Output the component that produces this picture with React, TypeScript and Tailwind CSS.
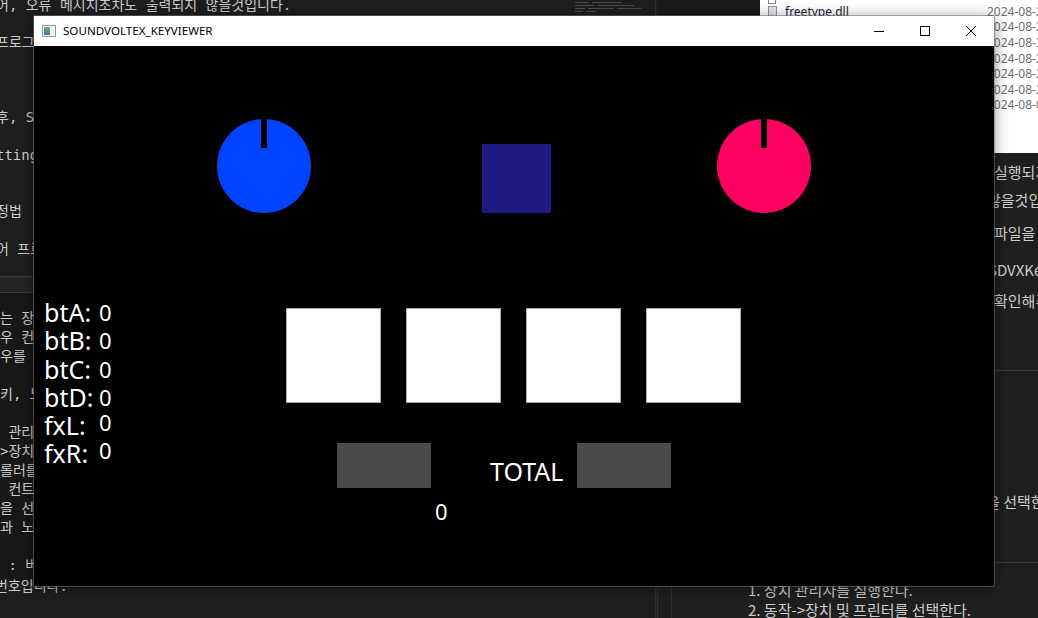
import React from 'react';

const upperLines = [
  '어, 오류 메시지조차도 출력되지 않을것입니다.',
  '',
  '프로그램이 정상적으로 실행되지 않는다면',
  '',
  '',
  '',
  '후, Settings 파일을 다시 확인해주세요.',
  '',
  'ttings.json 파일의 위치',
  '',
  '',
  '정법',
  '',
  '어 프로그램을 다시 실행해주세요.',
];

const lowerLines = [
  '는 장치 관리자에서 확인할 수 있습니다.',
  '우 컨트롤러의 버튼 번호가 다른',
  '우를 수정해야 합니다.',
  '',
  '키, 노브의 번호는 아래와 같습니다.',
  '',
  ' 관리자를 실행한다.',
  '>장치 및 프린터를 선택한다.',
  '롤러를 우클릭한다.',
  ' 컨트롤러 설정을 연다.',
  '을 선택한다.',
  '과 노브를 확인한다.',
  '',
  ' : 버튼 번호',
];

const dates = ['2024-08-21', '2024-08-21', '2024-08-30', '2024-08-21', '2024-08-21', '2024-08-21', '2024-08-08'];

const stats = [
  { label: 'btA:', fx: false },
  { label: 'btB:', fx: false },
  { label: 'btC:', fx: false },
  { label: 'btD:', fx: false },
  { label: 'fxL:', fx: true },
  { label: 'fxR:', fx: true },
];

function Knob({ color }: { color: string }) {
  return (
    <div className={`relative w-[94px] h-[94px] rounded-full ${color}`}>
      <div className="absolute top-0 left-[44px] w-[6px] h-[29px] bg-black" />
    </div>
  );
}

function KeyViewer() {
  return (
    <div className="relative h-[540px] bg-black text-white font-['Noto_Sans',sans-serif]">
      {/* left counters */}
      <div className="absolute left-[10px] top-[252px] flex flex-col">
        {stats.map((s) => (
          <div key={s.label} className="flex items-baseline h-[28.3px] leading-[28.3px]">
            <span className="w-[55px] text-[25px]">{s.label}</span>
            <span className={`relative text-[22px] ${s.fx ? '-top-[4px]' : '-top-[1px]'}`}>0</span>
          </div>
        ))}
      </div>

      {/* knobs + start */}
      <div className="flex items-end pt-[73px]">
        <div className="ml-[183px]">
          <Knob color="bg-[#0044ff]" />
        </div>
        <div className="ml-[171px] w-[69px] h-[69px] bg-[#1d1a84]" />
        <div className="ml-[166px]">
          <Knob color="bg-[#ff0062]" />
        </div>
      </div>

      {/* bt buttons */}
      <div className="flex gap-[25px] ml-[252px] mt-[95px]">
        {[0, 1, 2, 3].map((i) => (
          <div key={i} className="w-[95px] h-[95px] bg-white border border-[#a8a8a8]" />
        ))}
      </div>

      {/* fx + total */}
      <div className="flex items-start h-[45px] mt-[40px]">
        <div className="ml-[303px] w-[94px] h-[45px] bg-[#4a4a4a]" />
        <span className="ml-[59px] mt-[16px] w-[87px] text-[25px] leading-[25px]">TOTAL</span>
        <div className="w-[94px] h-[45px] bg-[#4a4a4a]" />
      </div>
      <div className="ml-[401px] mt-[12px] text-[22px] leading-[22px]">0</div>
    </div>
  );
}

export default function App() {
  return (
    <div className="relative w-[1038px] h-[618px] overflow-hidden bg-[#1f1f1f] font-['Noto_Sans_CJK_KR',sans-serif]">
      {/* left editor */}
      <div className="absolute left-0 top-0 w-[656px] h-[618px] bg-[#1e1e1e] border-r border-[#2f2f2f] text-[#cccccc] text-[14px] font-['DejaVu_Sans_Mono','Noto_Sans_CJK_KR',monospace] whitespace-pre">
        <div className="h-[280px] -mt-[4.4px] -ml-[4px] overflow-hidden">
          {upperLines.map((l, i) => (
            <div key={i} className="h-[18.8px] leading-[18.8px]">{l}</div>
          ))}
        </div>
        <div className="h-[17px] bg-[#252526] border-y border-[#3a3a3a]" />
        <div className="h-[289px] bg-[#181818] pt-[16px]">
          {lowerLines.map((l, i) => (
            <div key={i} className="h-[19px] leading-[19px]">{l}</div>
          ))}
        </div>
        <div className="h-[19px] leading-[19px] -ml-[5px] -mt-[5px]">번호입니다.</div>
        {/* minimap */}
        <div className="absolute left-[575px] top-[2px] flex flex-col gap-[2px] opacity-60">
          <div className="flex gap-[3px]"><div className="w-[14px] h-px bg-[#6a6a6a]" /><div className="w-[30px] h-px bg-[#6a6a6a]" /></div>
          <div className="flex gap-[3px]"><div className="w-[20px] h-px bg-[#6a6a6a]" /><div className="w-[36px] h-px bg-[#6a6a6a]" /></div>
          <div className="flex gap-[3px]"><div className="w-[10px] h-px bg-[#4d7fb8]" /><div className="w-[26px] h-px bg-[#6a6a6a]" /><div className="w-[24px] h-px bg-[#6a6a6a]" /></div>
          <div className="flex gap-[3px]"><div className="w-[8px] h-px bg-[#6a6a6a]" /><div className="w-[10px] h-px bg-[#6a6a6a]" /></div>
        </div>
      </div>

      {/* strip between editor and explorer */}
      <div className="absolute left-[657px] top-0 w-[103px] h-[16px] bg-[#1a1a1a]" />

      {/* file explorer */}
      <div className="absolute left-[760px] top-0 w-[278px] h-[153px] overflow-hidden bg-white font-['Noto_Sans',sans-serif] text-[12px]">
        <div className="flex flex-col -mt-[4px]">
          <div className="h-[8px] ml-[8px] w-[8px] border border-[#888] border-t-0" />
          {dates.map((d, i) => (
            <div key={i} className="flex items-center h-[15.6px] whitespace-nowrap">
              <div className="w-[25px] shrink-0 flex justify-center">
                {i === 0 && <div className="w-[9px] h-[11px] bg-[#dfe6ee] border border-[#8a97a6]" />}
              </div>
              <span className="w-[202px] shrink-0 text-[#1a1a3a]">{i === 0 ? 'freetype.dll' : ''}</span>
              <span className="shrink-0 text-[#6d6d6d]">{d}</span>
            </div>
          ))}
        </div>
      </div>

      {/* right markdown preview */}
      <div className="absolute left-[657px] top-[153px] w-[381px] h-[465px] bg-[#1f1f1f] text-[#cccccc] text-[15px]">
        <div className="absolute left-[337px] top-[9px] w-[60px] flex flex-col whitespace-pre">
          <div className="h-[20px] leading-[20px]">실행되지</div>
          <div className="h-[20px] leading-[20px] mt-[8px] -ml-[7px]">않을것입니다</div>
          <div className="h-[20px] leading-[20px] mt-[13px]">파일을 열어</div>
          <div className="h-[20px] leading-[20px] mt-[17px] -ml-[6px]">SDVXKeyViewer</div>
          <div className="h-[20px] leading-[20px] mt-[11px]">확인해주세요</div>
          <div className="h-[20px] leading-[20px] mt-[181px] -ml-[8px]">을 선택한다</div>
        </div>
        <div className="absolute left-[14px] right-0 top-[217px] h-px bg-[#3c3c3c]" />
        <div className="absolute left-[14px] right-0 top-[409px] h-px bg-[#3c3c3c]" />
        <div className="absolute left-0 top-[433px] bottom-0 w-px bg-[#2e2e2e]" />
        <div className="absolute left-[14px] top-[433px] bottom-0 w-px bg-[#2e2e2e]" />
        <div className="absolute left-[91px] top-[427px] flex flex-col whitespace-pre">
          <div className="h-[20px] leading-[20px]">1. 장치 관리자를 실행한다.</div>
          <div className="h-[20px] leading-[20px]">2. 동작-&gt;장치 및 프린터를 선택한다.</div>
        </div>
      </div>

      {/* keyviewer window */}
      <div className="absolute left-[34px] top-[16px] w-[960px] h-[570px] flex flex-col shadow-[0_0_0_1px_rgba(110,110,110,0.55),0_2px_14px_rgba(0,0,0,0.45)]">
        <div className="h-[30px] bg-white flex items-center font-['Noto_Sans',sans-serif]">
          <div className="ml-[8px] w-[14px] h-[12px] border border-[#9a9a9a] bg-[#f4f4f4] flex p-[1px]">
            <div className="w-[6px] h-full bg-gradient-to-b from-[#6fb07a] to-[#3f6fb5]" />
          </div>
          <span className="ml-[7px] text-[11.6px] text-black">SOUNDVOLTEX_KEYVIEWER</span>
          <div className="ml-auto flex h-full">
            <div className="w-[46px] flex items-center justify-center">
              <svg width="10" height="10" viewBox="0 0 10 10"><path d="M0 5.5h10" stroke="#000" strokeWidth="1" /></svg>
            </div>
            <div className="w-[46px] flex items-center justify-center">
              <svg width="10" height="10" viewBox="0 0 10 10"><rect x="0.5" y="0.5" width="9" height="9" fill="none" stroke="#000" strokeWidth="1" /></svg>
            </div>
            <div className="w-[46px] flex items-center justify-center">
              <svg width="10" height="10" viewBox="0 0 10 10"><path d="M0 0L10 10M10 0L0 10" stroke="#000" strokeWidth="1" /></svg>
            </div>
          </div>
        </div>
        <KeyViewer />
      </div>
    </div>
  );
}
